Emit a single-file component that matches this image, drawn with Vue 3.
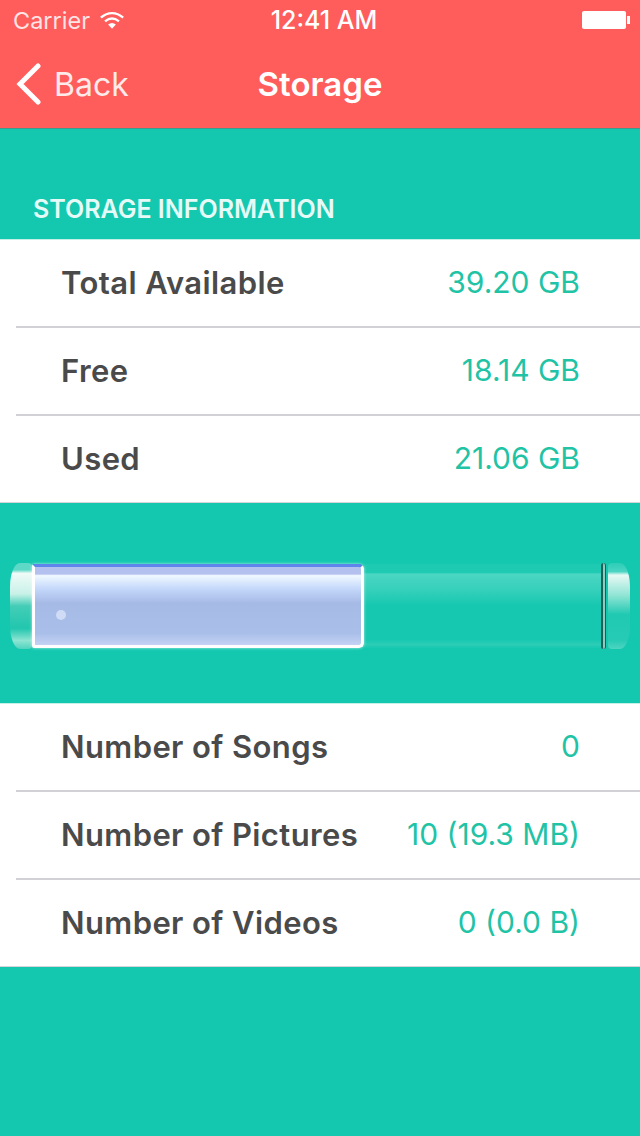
<template>
  <div class="screen">
    <header class="header">
      <div class="status-bar">
        <div class="status-left">
          <span>Carrier</span>
          <svg class="wifi" width="26" height="20" viewBox="0 0 28 20">
            <path d="M2 7.5C9.500 1 18.500 1 26 7.500" fill="none" stroke="#fff" stroke-width="2.600" />
            <path d="M6.500 11.500C11.500 7.500 16.500 7.500 21.500 11.500" fill="none" stroke="#fff" stroke-width="2.600" />
            <path d="M14 19.500L9.800 14.800C12.500 12.600 15.500 12.600 18.200 14.800Z" fill="#fff" />
          </svg>
        </div>
        <span class="time">12:41 AM</span>
        <div class="battery">
          <div class="battery-body"></div>
          <div class="battery-tip"></div>
        </div>
      </div>
      <nav class="nav">
        <div class="back">
          <svg width="28" height="42" viewBox="0 0 28 42">
            <path d="M24 3L6 21L24 39" fill="none" stroke="#fff" stroke-width="5" stroke-linecap="round" />
          </svg>
          <span>Back</span>
        </div>
        <h1 class="title">Storage</h1>
      </nav>
    </header>

    <main>
      <h2 class="section-title">STORAGE INFORMATION</h2>
      <ul class="table">
        <li v-for="row in storageRows" :key="row.label" class="row">
          <span class="label">{{ row.label }}</span>
          <span class="value">{{ row.value }}</span>
        </li>
      </ul>

      <div class="gauge-wrap">
        <div class="gauge">
          <div class="cap cap-left"></div>
          <div class="tube">
            <div class="fill">
              <span class="dot"></span>
            </div>
            <div class="empty"></div>
            <div class="ring"></div>
          </div>
          <div class="cap cap-right"></div>
        </div>
      </div>

      <ul class="table">
        <li v-for="row in mediaRows" :key="row.label" class="row">
          <span class="label">{{ row.label }}</span>
          <span class="value">{{ row.value }}</span>
        </li>
      </ul>
    </main>
  </div>
</template>

<script setup>
const storageRows = [
  { label: 'Total Available', value: '39.20 GB' },
  { label: 'Free', value: '18.14 GB' },
  { label: 'Used', value: '21.06 GB' }
]

const mediaRows = [
  { label: 'Number of Songs', value: '0' },
  { label: 'Number of Pictures', value: '10 (19.3 MB)' },
  { label: 'Number of Videos', value: '0 (0.0 B)' }
]
</script>

<style>
html,
body {
  margin: 0;
  background: #14c8b0;
}
</style>

<style scoped>
.screen {
  width: 640px;
  height: 1136px;
  overflow: hidden;
  background: #14c8b0;
  font-family: Inter, "Liberation Sans", sans-serif;
}

.header {
  height: 128px;
  background: #ff5c5c;
  border-bottom: 1px solid #3f9a8c;
  color: #fff;
}

.status-bar {
  display: flex;
  align-items: center;
  justify-content: space-between;
  height: 40px;
  padding: 0 10px 0 13px;
  font-size: 23.5px;
  position: relative;
}

.status-left {
  display: flex;
  align-items: center;
  gap: 9px;
  color: #ffe4e4;
}

.time {
  position: absolute;
  left: 0;
  right: 0;
  text-align: center;
  font-size: 25px;
  font-weight: 500;
  padding-left: 8px;
}

.battery {
  display: flex;
  align-items: center;
}

.battery-body {
  width: 44px;
  height: 18px;
  background: #fff;
  border-radius: 2px;
}

.battery-tip {
  width: 3px;
  height: 8px;
  margin-left: 1px;
  background: #fff;
}

.nav {
  position: relative;
  height: 88px;
  display: flex;
  align-items: center;
  justify-content: center;
}

.back {
  position: absolute;
  left: 14px;
  top: 23px;
  display: flex;
  align-items: center;
  gap: 12px;
  font-size: 32px;
  color: #ffeaea;
}

.title {
  margin: 0;
  font-size: 33px;
  font-weight: 600;
}

.section-title {
  margin: 0;
  height: 110px;
  padding: 65px 0 0 33px;
  box-sizing: border-box;
  color: #e6fbf7;
  font-size: 25px;
  line-height: 30px;
  font-weight: 600;
}

.table {
  margin: 0;
  padding: 0 0 0 16px;
  list-style: none;
  background: #fff;
  border-top: 1px solid #c5f0e8;
  border-bottom: 1px solid #d6d6da;
}

.row {
  display: flex;
  align-items: center;
  justify-content: space-between;
  height: 86px;
  box-sizing: content-box;
  padding: 0 60px 0 45px;
  border-bottom: 2px solid #d2d2d6;
}

.row:last-child {
  border-bottom: 0;
}

.label {
  position: relative;
  top: -1px;
  color: #4a4a4a;
  font-size: 31px;
  font-weight: 600;
  letter-spacing: 0.4px;
}

.value {
  position: relative;
  top: -1px;
  color: #1fc3a5;
  font-size: 30px;
}

.gauge-wrap {
  height: 200px;
  box-sizing: border-box;
  padding: 59px 10px 0;
}

.gauge {
  display: flex;
  align-items: stretch;
  height: 88px;
}

.cap {
  width: 22px;
  margin: 1px 0;
}

.cap-left {
  border-radius: 10px 4px 4px 10px / 24px 4px 4px 24px;
  background: linear-gradient(#5ed9c8 0, #5ed9c8 8%, #f0fbf8 12%, #c8f1e7 36%, #43cdb7 50%, #22c6ae 76%, #8ee5d3 90%, #4fd3bd 100%);
}

.cap-right {
  border-radius: 4px 10px 10px 4px / 4px 24px 24px 4px;
  background: linear-gradient(#2ccdb7 0, #4ad5c2 10%, #e7f9f5 14%, #8ee4d4 38%, #20c9b2 60%, #27cbb5 90%, #4ed4c0 100%);
}

.tube {
  flex: 1;
  display: flex;
  align-items: stretch;
}

.fill {
  position: relative;
  width: 332px;
  margin: 2px 0 2px;
  box-sizing: border-box;
  border: 3px solid #fff;
  border-top: 3px solid #5f84ec;
  border-radius: 2px 5px 5px 2px;
  box-shadow: 0 0 3px rgba(255, 255, 255, 0.7);
  background: linear-gradient(#b4c0ee 0, #b4c0ee 9%, #f0f9ff 11%, #c4d8fb 28%, #a6bae6 46%, #a9bfe9 85%, #c6d2f4 100%);
}

.dot {
  position: absolute;
  left: 21px;
  top: 43px;
  width: 10px;
  height: 10px;
  border-radius: 50%;
  background: #d0dcf6;
}

.empty {
  flex: 1;
  margin-top: 2px;
  margin-bottom: 2px;
  background: linear-gradient(#1fcab3 0, #1fcab3 10%, #4bd6c3 12%, #36d0bb 30%, #16c8b0 50%, #16c8b0 90%, #2dcdb7 96%, #16c8b0 100%);
}

.ring {
  width: 5px;
  margin: 1px 2px 1px 0;
  background: #8fc9bf;
  border-left: 2px solid #1a5f58;
  border-right: 1px solid #1a5f58;
  box-sizing: border-box;
  border-radius: 3px;
}
</style>
